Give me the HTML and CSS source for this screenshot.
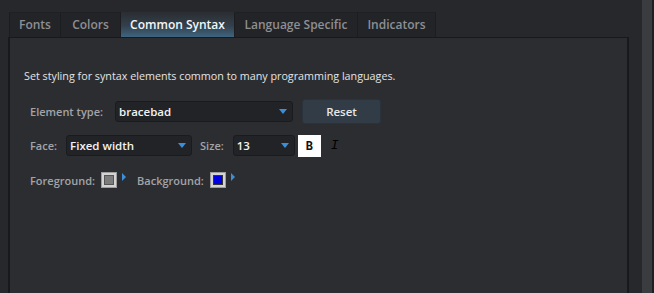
FILE: index.html
```html
<!DOCTYPE html>
<html>
<head>
<meta charset="utf-8">
<link rel="stylesheet" href="styles.css">
</head>
<body>
<div class="window">
  <div class="main">
    <div class="tabs">
      <div class="tab">Fonts</div>
      <div class="tab">Colors</div>
      <div class="tab active">Common Syntax</div>
      <div class="tab">Language Specific</div>
      <div class="tab">Indicators</div>
    </div>
    <div class="panel">
      <p class="intro">Set styling for syntax elements common to many programming languages.</p>
      <div class="row r1">
        <span class="label">Element type:</span>
        <div class="select sel-elem"><span>bracebad</span><i class="arrow"></i></div>
        <button class="btn">Reset</button>
      </div>
      <div class="row r2">
        <span class="label">Face:</span>
        <div class="select sel-face"><span>Fixed width</span><i class="arrow"></i></div>
        <span class="label size">Size:</span>
        <div class="select sel-size"><span>13</span><i class="arrow"></i></div>
        <div class="bold">B</div>
        <div class="italic">I</div>
      </div>
      <div class="row r3">
        <span class="label">Foreground:</span>
        <div class="swatch"><i class="fg"></i></div>
        <i class="tri"></i>
        <span class="label bglabel">Background:</span>
        <div class="swatch"><i class="bg"></i></div>
        <i class="tri"></i>
      </div>
    </div>
  </div>
  <div class="gutter"></div>
  <div class="scroll"></div>
  <div class="edge"></div>
</div>
</body>
</html>
```
FILE: styles.css
```css
html, body {
  margin: 0;
  padding: 0;
  background: #27282c;
  height: 100%;
  overflow: hidden;
}
body {
  font-family: "Open Sans", "DejaVu Sans", sans-serif;
  font-size: 11px;
  color: #d8d8d8;
}
.window {
  display: flex;
  height: 293px;
}
.main {
  width: 629px;
  padding-left: 8px;
  padding-top: 12px;
  box-sizing: border-box;
  display: flex;
  flex-direction: column;
}
.gutter {
  width: 13px;
  background: #27282c;
}
.scroll {
  width: 10px;
  background: #3b3c3f;
}
.edge {
  width: 2px;
  background: #1e1f22;
}
.tabs {
  display: flex;
  height: 25px;
  padding-left: 1px;
}
.tab {
  height: 25px;
  box-sizing: border-box;
  line-height: 24px;
  font-size: 12px;
  color: #8e8f93;
  font-weight: 600;
  background: #232428;
  border-right: 1px solid #1c1d20;
  border-top: 1px solid #1f2023;
  text-align: center;
}
.tab:first-child { width: 52px; border-left: 1px solid #1c1d20; }
.tab:nth-child(2) { width: 60px; }
.tab:nth-child(3) { width: 114px; }
.tab:nth-child(4) { width: 123px; }
.tab:nth-child(5) { width: 78px; }
.tab.active {
  color: #f4f6f8;
  background: linear-gradient(#2b2e33, #33414d 55%, #3f6480);
  border-top-color: #2b2e33;
}
.panel {
  flex: 1;
  background: #2c2d31;
  border-top: 1px solid #18191b;
  border-left: 2px solid #18191b;
  border-right: 2px solid #18191b;
  padding-left: 14px;
}
.intro {
  margin: 30px 0 0 0;
  color: #e4e4e4;
  font-size: 10.75px;
  height: 16px;
  line-height: 16px;
}
.row {
  display: flex;
  align-items: center;
  margin-left: 6px;
}
.r1 { margin-top: 15px; height: 24px; }
.r2 { margin-top: 11px; height: 23px; }
.r3 { margin-top: 15px; height: 16px; }
.label {
  color: #a3a4a8;
  font-size: 11px;
  font-weight: 600;
}
.select {
  height: 21px;
  box-sizing: border-box;
  background: #222327;
  border: 1px solid #1a1b1e;
  border-radius: 3px;
  display: flex;
  align-items: center;
  justify-content: space-between;
  padding: 0 5px 0 3px;
  color: #f2f2f2;
  font-weight: 600;
  font-size: 11.5px;
}
.arrow {
  width: 0;
  height: 0;
  border-left: 4px solid transparent;
  border-right: 4px solid transparent;
  border-top: 5px solid #3c8fd6;
}
.sel-elem { width: 178px; margin-left: 12px; }
.btn {
  margin-left: 9px;
  width: 79px;
  height: 25px;
  background: #323c46;
  border: 1px solid #2a333c;
  border-radius: 3px;
  color: #e8e8e8;
  font-family: inherit;
  font-weight: 600;
  font-size: 11.5px;
}
.sel-face { width: 126px; margin-left: 9px; }
.size { margin-left: 8px; }
.sel-size { width: 62px; margin-left: 9px; }
.bold {
  margin-left: 3px;
  width: 23px;
  height: 22px;
  background: #ffffff;
  color: #111;
  font-family: "DejaVu Sans Mono", monospace;
  font-weight: bold;
  font-size: 12px;
  display: flex;
  align-items: center;
  justify-content: center;
}
.italic {
  margin-left: 10px;
  color: #000;
  font-family: "Liberation Mono", monospace;
  font-style: italic;
  font-size: 13px;
}
.swatch {
  margin-left: 6px;
  width: 16px;
  height: 16px;
  box-sizing: border-box;
  background: #d4d4d4;
  border: 1px solid #9d9d9d;
  display: flex;
  align-items: center;
  justify-content: center;
}
.swatch i {
  width: 8px;
  height: 8px;
  border: 1px solid #555;
}
.swatch .fg { background: #7c7c7c; }
.swatch .bg { background: #0000e0; border-color: #333; }
.tri {
  align-self: flex-start;
  margin-left: 5px;
  margin-top: 1px;
  width: 0;
  height: 0;
  border-top: 4px solid transparent;
  border-bottom: 4px solid transparent;
  border-left: 4px solid #3c8fd6;
}
.bglabel { margin-left: 11px; }
```
